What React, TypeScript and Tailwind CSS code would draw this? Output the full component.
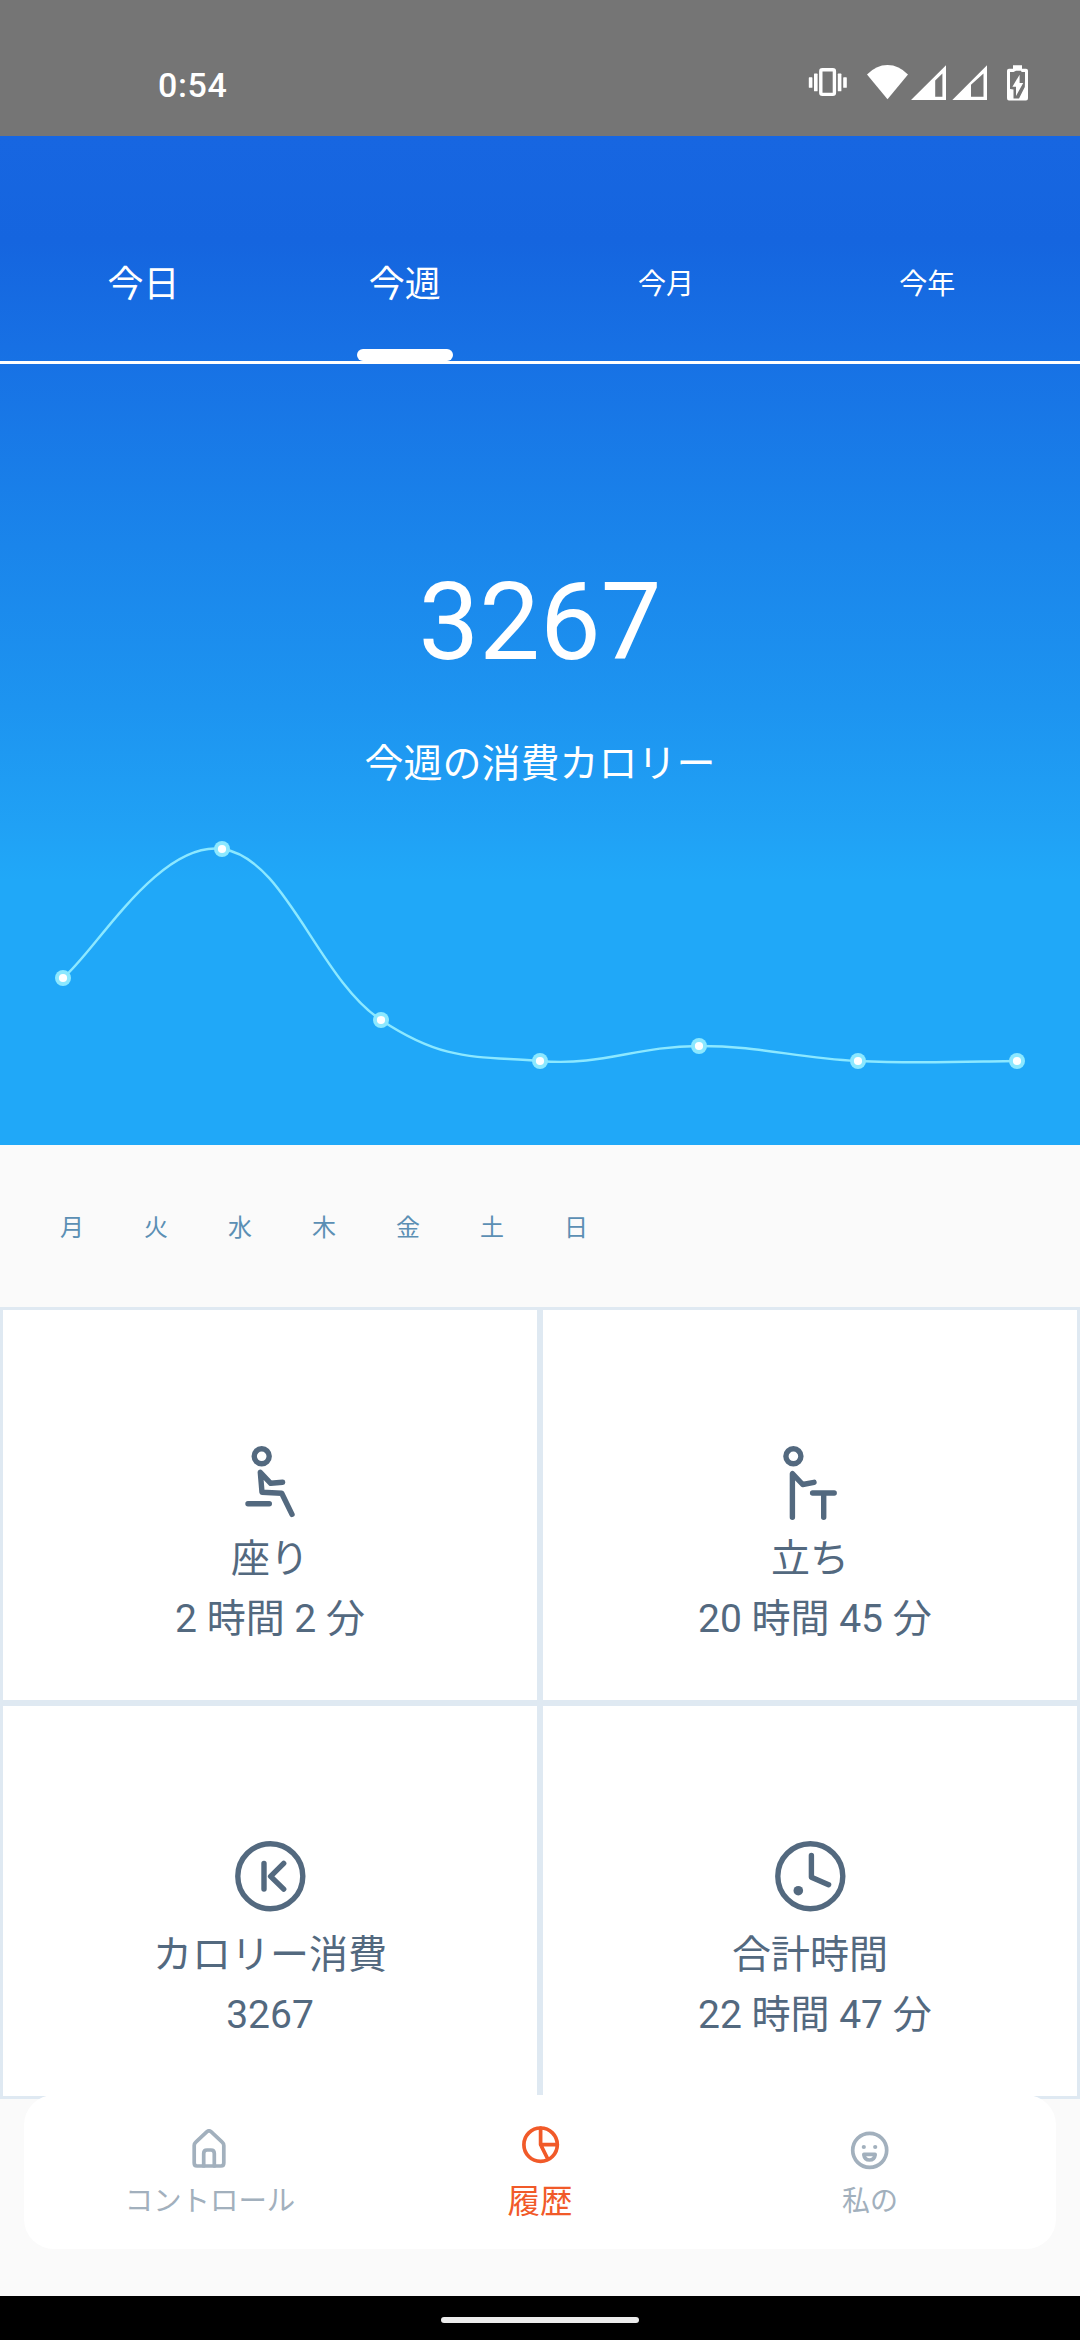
import type { ReactNode } from 'react';

const tabs = [
  { label: '今日', size: 'text-[36px]', active: false },
  { label: '今週', size: 'text-[36px]', active: true },
  { label: '今月', size: 'text-[28px]', active: false },
  { label: '今年', size: 'text-[28px]', active: false },
];

const weekdays = ['月', '火', '水', '木', '金', '土', '日'];

const points = [
  { x: 63, y: 178 },
  { x: 222, y: 49 },
  { x: 381, y: 220 },
  { x: 540, y: 261 },
  { x: 699, y: 246 },
  { x: 858, y: 261 },
  { x: 1017, y: 261 },
];

// Cubic line, each handle is 20% of the distance between the neighbours
function curve(intensity = 0.2) {
  const at = (i: number) => points[Math.max(0, Math.min(points.length - 1, i))];
  let d = `M${points[0].x} ${points[0].y}`;
  for (let i = 1; i < points.length; i++) {
    const a = at(i - 1);
    const b = at(i);
    const c1x = a.x + (b.x - at(i - 2).x) * intensity;
    const c1y = a.y + (b.y - at(i - 2).y) * intensity;
    const c2x = b.x - (at(i + 1).x - a.x) * intensity;
    const c2y = b.y - (at(i + 1).y - a.y) * intensity;
    d += ` C${c1x} ${c1y} ${c2x} ${c2y} ${b.x} ${b.y}`;
  }
  return d;
}

function StatusIcons() {
  return (
    <svg width="222" height="40" viewBox="0 0 222 40" fill="#fff">
      {/* vibrate */}
      <rect x="12.8" y="7.8" width="13.6" height="24.6" rx="1.6" fill="none" stroke="#fff" strokeWidth="3.4" />
      <rect x="0.8" y="15.3" width="3.6" height="10.5" rx="0.6" />
      <rect x="6" y="11.6" width="3.6" height="17.7" rx="0.6" />
      <rect x="29.8" y="11.6" width="3.6" height="17.7" rx="0.6" />
      <rect x="35.2" y="15.3" width="3.6" height="10.5" rx="0.6" />
      {/* wifi */}
      <path d="M59 12.6Q68 3 79.5 3T100 12.6L79.5 37.2Z" />
      {/* signal */}
      <path fillRule="evenodd" d="M103 38L138 3.3V38ZM127.2 18.6V34.8H134.4V11.6Z" />
      <path fillRule="evenodd" d="M144.3 38L179 3.3V38ZM163 22.8V34.8H175.5V11.4Z" />
      {/* battery */}
      <path d="M205 3.3H214V6.7H218Q220 6.7 220 8.7V36.3Q220 38.6 218 38.6H201Q199 38.6 199 36.3V8.7Q199 6.7 201 6.7H205Z" />
      <path
        d="M202 10H205.5L208 8.7H213L213.6 10H217V18.5L216.8 25L211 36.5H205.5V27.5L202 27Z"
        fill="#757575"
      />
      <path d="M211.6 12.7L204.4 24.7H208V34L215.2 21H211.6Z" />
    </svg>
  );
}

function CellIcon({ children }: { children: ReactNode }) {
  return (
    <svg
      width="80"
      height="80"
      viewBox="0 0 80 80"
      fill="none"
      stroke="#53697f"
      strokeWidth="5.4"
      strokeLinecap="round"
      strokeLinejoin="round"
    >
      {children}
    </svg>
  );
}

// two-digit hours come padded with a leading space
const stats = [
  {
    label: '座り',
    value: '2 時間 2 分',
    icon: (
      <CellIcon>
        <circle cx="31.7" cy="16.3" r="7.5" />
        <path d="M52.6 42.3L40.7 43.3L30.3 32.3L32 52.3L51.7 53.3L62 74.4M18 63.8H39.3" />
      </CellIcon>
    ),
  },
  {
    label: '立ち',
    value: ' 20 時間 45 分',
    icon: (
      <CellIcon>
        <circle cx="23.4" cy="16.3" r="7.5" />
        <path d="M44 42.3L32.7 44.5L22.4 33.7V77.3M42.6 53H64.2M53.7 53V77.3" />
      </CellIcon>
    ),
  },
  {
    label: 'カロリー消費',
    value: '3267',
    icon: (
      <CellIcon>
        <circle cx="40.3" cy="40.2" r="32.5" />
        <path d="M34 27.5V53M53.7 27.3L40.6 40.3L53.7 53.2" />
      </CellIcon>
    ),
  },
  {
    label: '合計時間',
    value: ' 22 時間 47 分',
    icon: (
      <CellIcon>
        <circle cx="40.3" cy="40.2" r="32.5" />
        <path d="M41.4 19.5V41.3L58.6 48.7" />
        <circle cx="28.3" cy="54.7" r="4.8" fill="#53697f" stroke="none" />
      </CellIcon>
    ),
  },
];

function NavIcon({ children }: { children: ReactNode }) {
  return (
    <svg
      width="40"
      height="40"
      viewBox="0 0 40 40"
      fill="none"
      stroke="currentColor"
      strokeWidth="3.7"
      strokeLinecap="round"
      strokeLinejoin="round"
    >
      {children}
    </svg>
  );
}

function BottomNav() {
  return (
    <nav className="relative mx-6 -mt-1 flex h-[154px] rounded-[30px] bg-white px-[21px]">
      <div className="flex flex-1 flex-col items-center pt-[34px] text-[#a2b0bd]">
        <NavIcon>
          <path d="M17 2.7Q19 0.9 21 2.7L32.2 13.2Q33.8 14.6 33.8 16.5V34Q33.8 37 31 37H7Q4.2 37 4.2 34V16.5Q4.2 14.6 5.8 13.2Z" />
          <path d="M13.7 37V24.5Q13.7 21 17 21H21Q24.3 21 24.3 24.5V37" />
        </NavIcon>
        <span className="mt-[13px] text-[28.4px] leading-[40px]">コントロール</span>
      </div>
      <div className="flex flex-1 flex-col items-center pt-[30px] text-[#f15a29]">
        <NavIcon>
          <circle cx="20.6" cy="19.7" r="16.7" />
          <path d="M20.6 3V19.7H37.3M20.6 19.7L27.8 34" />
        </NavIcon>
        <span className="mt-[17px] text-[32.5px] leading-[40px]">履歴</span>
      </div>
      <div className="flex flex-1 flex-col items-center pt-[35px] text-[#a2b0bd]">
        <NavIcon>
          <circle cx="19.7" cy="20.3" r="17" />
          <circle cx="13.8" cy="17" r="2.1" fill="currentColor" stroke="none" />
          <circle cx="25.2" cy="17" r="2.1" fill="currentColor" stroke="none" />
          <path d="M13.9 24.3H25.1V25Q24.4 30 19.5 30T13.9 25Z" />
        </NavIcon>
        <span className="mt-[12px] text-[28px] leading-[40px]">私の</span>
      </div>
    </nav>
  );
}

export default function App() {
  return (
    <div className="flex h-[2340px] w-[1080px] flex-col overflow-hidden bg-[#fafafa] font-['Roboto','Noto_Sans_CJK_JP',sans-serif]">
      <div className="flex h-[136px] shrink-0 items-start justify-between bg-[#757575] pr-[50px] pl-[158px] text-white">
        <span className="mt-[65px] text-[34px] leading-[40px] font-medium tracking-[0.6px]">0:54</span>
        <div className="mt-[62px]">
          <StatusIcons />
        </div>
      </div>

      <header className="flex h-[1009px] shrink-0 flex-col bg-[linear-gradient(180deg,#1766e1_0px,#1565df_105px,#1770e4_210px,#1a85eb_410px,#1d94f0_570px,#20a1f5_690px,#20a8f8_745px)] pt-[69px] text-white">
        <div className="flex h-[159px] border-b-[3px] border-white pr-[22px] pl-[13px]">
          {tabs.map(t => (
            <div key={t.label} className={`relative flex flex-1 items-center justify-center pt-1 leading-none ${t.size}`}>
              {t.label}
              {t.active && <div className="absolute bottom-0 h-3 w-24 rounded-[6px] bg-white" />}
            </div>
          ))}
        </div>

        <div className="mt-[194px] text-center text-[108px] leading-[128px]">3267</div>
        <div className="mt-[48px] text-center text-[39px] leading-[60px]">今週の消費カロリー</div>

        <svg className="mt-[6px] shrink-0" width="1080" height="340" viewBox="0 0 1080 340">
          <path d={curve()} fill="none" stroke="#8ce8ff" strokeWidth="2.4" />
          {points.map(p => (
            <g key={p.x}>
              <circle cx={p.x} cy={p.y} r="8" fill="#8ce8ff" />
              <circle cx={p.x} cy={p.y} r="4.1" fill="#fff" />
            </g>
          ))}
        </svg>
      </header>

      <div className="flex h-[162px] shrink-0 items-center gap-[60px] px-[60px] pt-1 text-[24px] text-[#5b8fb4]">
        {weekdays.map(d => (
          <span key={d} className="w-6 text-center">{d}</span>
        ))}
      </div>

      <section className="grid h-[792px] shrink-0 grid-cols-2 grid-rows-2">
        {stats.map(s => (
          <div
            key={s.label}
            className="flex flex-col items-center border-[3px] border-[#dfe9f2] bg-white pt-[130px] text-[39px] leading-[60px] text-[#53697f]"
          >
            {s.icon}
            <div className="mt-[9px]">{s.label}</div>
            <div className="whitespace-pre">{s.value}</div>
          </div>
        ))}
      </section>

      <BottomNav />

      <div className="mt-auto flex h-[44px] shrink-0 justify-center bg-black pt-[21px]">
        <div className="h-[6px] w-[198px] rounded-full bg-[#ebebeb]" />
      </div>
    </div>
  );
}
